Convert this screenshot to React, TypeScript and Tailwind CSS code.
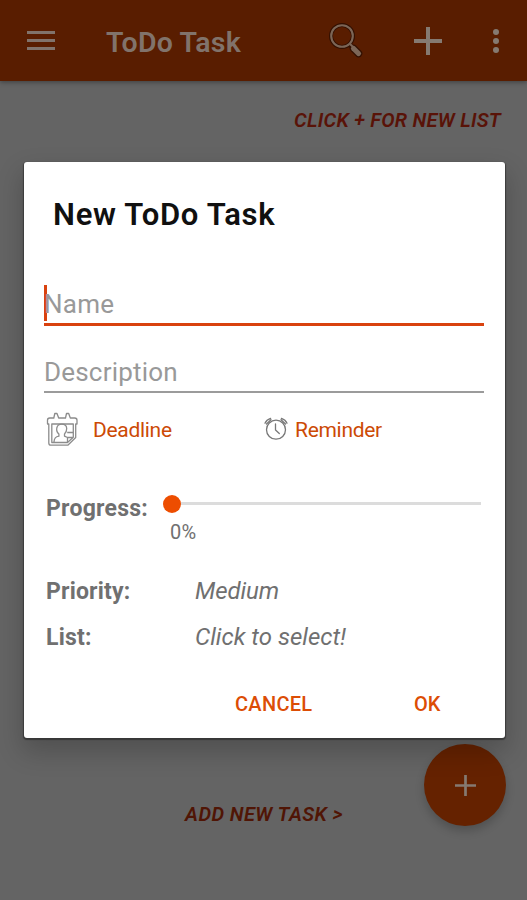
import React from "react";

function SearchIcon() {
  return (
    <svg className="ml-[87px] size-[36px] shrink-0" viewBox="0 0 36 36" fill="none">
      <circle cx="13" cy="13" r="11" stroke="#321000" strokeWidth="4" />
      <path d="M20.5 21.5L23.5 24.5" stroke="#321000" strokeWidth="4.5" />
      <path d="M24.5 25.5L29.5 30.5" stroke="#321000" strokeWidth="7.5" strokeLinecap="round" />
      <circle cx="13" cy="13" r="10.8" stroke="#7c6657" strokeWidth="2.1" />
      <path d="M20.8 20.8L24 24" stroke="#7c6657" strokeWidth="2" />
      <path d="M24.5 25.5L29.5 30.5" stroke="#7c6657" strokeWidth="5.2" strokeLinecap="round" />
    </svg>
  );
}

function CalendarIcon() {
  return (
    <svg className="size-[34px] shrink-0" viewBox="0 0 34 34" fill="none" stroke="#8c8c8c" strokeWidth="1.3" strokeLinejoin="round">
      <path d="M1.5 12V8.2Q1.5 6 3.7 6H7.8L8.8 1.5H11L12.7 6H19.5L20.5 1.5H22.7L24.3 6H28.7Q31 6 31 8.2V12H29.7V25.5L21.8 33.2H5Q2.8 33.2 2.8 31V12Z" />
      <path d="M5.8 12H27.3V25.2L21.5 30.5H5.8Z" />
      <path d="M8 30C8.2 26 9.5 24.8 12.9 24.2V22C11 20.5 10.4 18.2 10.8 16C11.4 13.3 13.4 12.2 15.7 12.2C18.4 12.2 20.6 13.8 20.7 16.5C20.7 19 20 20.7 18.5 22V24.2L21.5 25.5V30.5M21.2 20.5H27.3M21.5 25.5H27" />
    </svg>
  );
}

function AlarmIcon() {
  return (
    <svg className="size-[24px] shrink-0" viewBox="0 0 24 24" fill="none" stroke="#777" strokeWidth="1.3" strokeLinecap="round">
      <circle cx="12" cy="12.7" r="9.5" />
      <path d="M11.5 7V13L15.3 16.5M1 6.2C2 3.8 4 2.2 6.6 1.3M17.4 1.3C20 2.2 22 3.8 23 6.2M2.5 7L7 2.8M17 2.8L21.5 7" />
    </svg>
  );
}

function PlusIcon({ className, width }: { className: string; width: number }) {
  return (
    <svg className={className} viewBox="0 0 28 28" stroke="#857a71" strokeWidth={width}>
      <path d="M14 0V28M0 14H28" />
    </svg>
  );
}

function Backdrop() {
  return (
    <div className="flex h-full flex-col">
      <header className="flex h-[81px] shrink-0 items-center bg-[#591d00] pl-[27px] shadow-[0_1px_5px_rgba(0,0,0,0.4)]">
        <div className="flex w-[28px] flex-col gap-[5px]">
          <div className="h-[3px] bg-[#81736b]" />
          <div className="h-[3px] bg-[#81736b]" />
          <div className="h-[3px] bg-[#81736b]" />
        </div>
        <h1 className="ml-[51px] mt-[4px] w-[136px] whitespace-nowrap text-[28.5px] leading-[34px] font-semibold tracking-[0.2px] text-[#81736b]">ToDo Task</h1>
        <SearchIcon />
        <PlusIcon className="ml-[49px] size-[28px] shrink-0" width={4} />
        <div className="ml-[51px] flex flex-col gap-[3px]">
          <div className="size-[6px] rounded-full bg-[#857a71]" />
          <div className="size-[6px] rounded-full bg-[#857a71]" />
          <div className="size-[6px] rounded-full bg-[#857a71]" />
        </div>
      </header>
      <p className="mt-[27px] self-end whitespace-nowrap pr-[26px] text-[20px] leading-[24px] font-semibold tracking-[0.25px] text-[#591308] italic">CLICK + FOR NEW LIST</p>
      <footer className="mt-auto mb-[74px] flex h-[82px] items-center justify-end pr-[21px]">
        <p className="mt-[58px] mr-[81px] whitespace-nowrap text-[20px] leading-[24px] font-semibold tracking-[0.4px] text-[#501505] italic">ADD NEW TASK &gt;</p>
        <div className="flex size-[82px] items-center justify-center rounded-full bg-[#652200] shadow-[0_5px_10px_rgba(0,0,0,0.2)]">
          <PlusIcon className="size-[21px]" width={3.6} />
        </div>
      </footer>
    </div>
  );
}

function TaskDialog() {
  return (
    <section className="absolute top-[162px] left-[24px] flex h-[576px] w-[480.5px] flex-col rounded-[3px] bg-white pr-[20.5px] pl-[20px] whitespace-nowrap shadow-[0_1px_1px_1px_rgba(0,0,0,0.35),0_12px_26px_2px_rgba(0,0,0,0.2)]">
      <h2 className="mt-[34px] ml-[9px] text-[31px] leading-[38px] font-semibold tracking-[0.7px] text-[#101010]">New ToDo Task</h2>
      <div className="mt-[51px] flex h-[41px] items-start border-b-[3px] border-[#d9420f]">
        <div className="h-[36px] w-[3px] shrink-0 bg-[#d9420f]" />
        <span className="-ml-[3px] mt-[3px] text-[26px] leading-[32px] tracking-[0.25px] text-[#999]">Name</span>
      </div>
      <div className="mt-[30px] h-[37px] border-b-2 border-[#9b9b9b] text-[26px] leading-[32px] tracking-[0.2px] text-[#999]">Description</div>
      <div className="mt-[18px] flex h-[36px] items-center text-[21px] leading-[26px] tracking-[-0.3px] text-[#cc4a05]">
        <div className="flex w-[220px] items-center gap-[13px] pl-[2px]">
          <CalendarIcon />
          <span className="mt-[2px]">Deadline</span>
        </div>
        <div className="flex items-center gap-[7px]">
          <AlarmIcon />
          <span className="mt-[2px]">Reminder</span>
        </div>
      </div>
      <div className="mt-[47px] flex h-[52px] items-start pr-[3px] text-[#707070]">
        <span className="mt-[1px] ml-[2px] w-[117px] text-[23px] leading-[28px] font-bold tracking-[0.25px]">Progress:</span>
        <div className="flex flex-1 flex-col">
          <div className="flex h-[18px] items-center pt-[1px]">
            <div className="size-[18px] shrink-0 rounded-full bg-[#ed4d00]" />
            <div className="h-[3px] flex-1 bg-[#dcdcdc]" />
          </div>
          <span className="mt-[8px] ml-[7px] text-[20px] leading-[24px] tracking-[0.3px]">0%</span>
        </div>
      </div>
      <div className="mt-[31px] ml-[2px] grid grid-cols-[149px_1fr] gap-y-[18px] text-[23px] leading-[28px] text-[#707070]">
        <span className="mt-[1px] -mb-[1px] font-bold tracking-[0.2px]">Priority:</span>
        <span className="text-[24px] tracking-[-0.1px] italic">Medium</span>
        <span className="mt-[1px] -mb-[1px] font-bold tracking-[0.2px]">List:</span>
        <span className="text-[24px] italic">Click to select!</span>
      </div>
      <div className="mt-[40px] flex text-[20px] leading-[26px] font-medium text-[#dc4d05]">
        <button className="ml-[191px] w-[179px] text-left tracking-[0.3px]">CANCEL</button>
        <button>OK</button>
      </div>
    </section>
  );
}

export default function App() {
  return (
    <main className="relative h-[900px] w-[527px] overflow-hidden bg-[#646464] font-['Roboto',sans-serif]">
      <Backdrop />
      <TaskDialog />
    </main>
  );
}
